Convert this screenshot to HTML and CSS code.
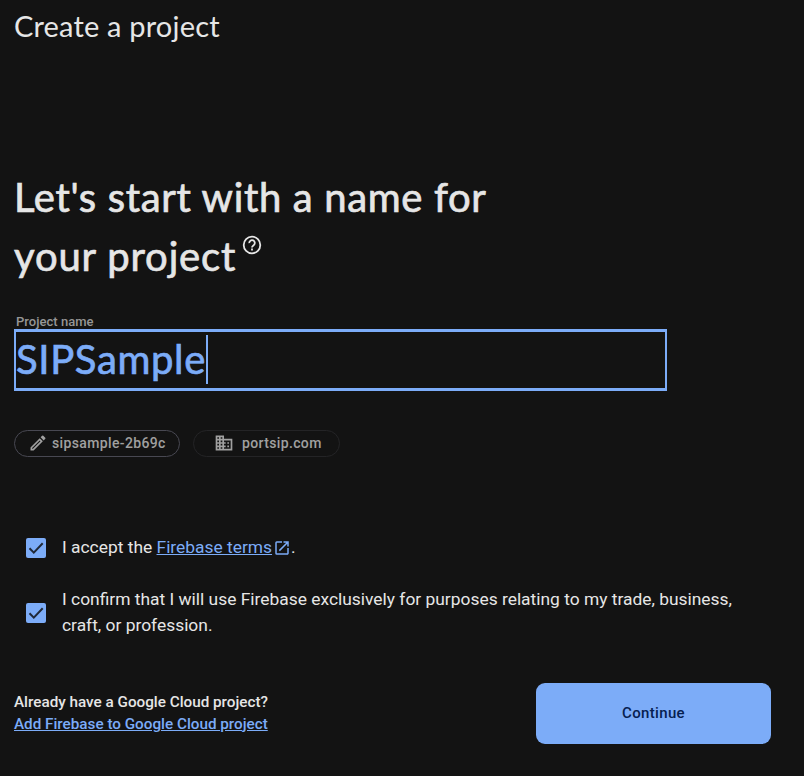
FILE: index.html
```html
<!DOCTYPE html>
<html lang="en">
<head>
<meta charset="utf-8">
<title>Create a project</title>
<link rel="stylesheet" href="styles.css">
</head>
<body>
<main class="page">
  <header class="title">Create a project</header>
  <h1 class="heading"><span class="line1">Let's start with a name for</span><br><span class="line2">your project</span><svg class="help" viewBox="0 0 20 20"><circle cx="10" cy="10" r="8.3"/><path d="M7.2 8.1a2.8 2.8 0 1 1 4.5 2.1c-.9.8-1.7 1.1-1.7 2.2M10 13.6v1.9"/></svg></h1>
  <label class="label">Project name</label>
  <div class="field"><span class="value">SIPSample</span><span class="caret"></span></div>
  <div class="chips">
    <div class="chip id"><svg class="pencil" viewBox="0 0 24 24"><path d="M3 17.25V21h3.75L17.81 9.94l-3.75-3.75L3 17.25zM5.92 19H5v-.92l9.06-9.06.92.92L5.92 19zM20.71 5.63l-2.34-2.34a1 1 0 0 0-1.42 0l-1.83 1.83 3.75 3.75 1.84-1.83a1 1 0 0 0 0-1.41z"/></svg><span>sipsample-2b69c</span></div>
    <div class="chip org"><svg class="domain" viewBox="0 0 24 24"><path d="M12 7V3H2v18h20V7H12zM6 19H4v-2h2v2zm0-4H4v-2h2v2zm0-4H4V9h2v2zm0-4H4V5h2v2zm4 12H8v-2h2v2zm0-4H8v-2h2v2zm0-4H8V9h2v2zm0-4H8V5h2v2zm10 12h-8v-2h2v-2h-2v-2h2v-2h-2V9h8v10zm-2-8h-2v2h2v-2zm0 4h-2v2h2v-2z"/></svg><span>portsip.com</span></div>
  </div>
  <div class="check first">
    <span class="box"><svg viewBox="0 0 20 20"><path d="M3.5 10.3l4.3 4.3L16.7 5.2"/></svg></span>
    <p class="terms">I accept the <a>Firebase terms</a><svg class="ext" viewBox="0 0 24 24"><path d="M19 19H5V5h7V3H5a2 2 0 0 0-2 2v14a2 2 0 0 0 2 2h14c1.1 0 2-.9 2-2v-7h-2v7zM14 3v2h3.59l-9.83 9.83 1.41 1.41L19 6.41V10h2V3h-7z"/></svg>.</p>
  </div>
  <div class="check second">
    <span class="box"><svg viewBox="0 0 20 20"><path d="M3.5 10.3l4.3 4.3L16.7 5.2"/></svg></span>
    <p class="confirm">I confirm that I will use Firebase exclusively for purposes relating to my trade, business,<br>craft, or profession.</p>
  </div>
  <footer class="footer">
    <div class="existing">Already have a Google Cloud project?<br><a>Add Firebase to Google Cloud project</a></div>
    <button class="continue">Continue</button>
  </footer>
</main>
</body>
</html>
```
FILE: styles.css
```css
* { box-sizing: border-box; }
body { margin: 0; background: #131313; color: #e6e6e6; font-family: Roboto, sans-serif; }
.page { height: 776px; padding: 0 33px 0 14px; display: flex; flex-direction: column; overflow: hidden; }
svg { fill: currentColor; flex: none; }
a { color: #7cacf8; text-decoration: underline; }
.title { height: 56px; font: 400 29px/52px Lato, sans-serif; letter-spacing: .18px; white-space: nowrap; }
.heading { margin: 112px 0 0; height: 118px; font: 400 40px/59px Lato, sans-serif; -webkit-text-stroke: .7px currentColor; white-space: nowrap; }
.line1 { letter-spacing: .66px; }
.line2 { letter-spacing: .85px; }
.help { width: 20px; height: 20px; margin-left: 6px; vertical-align: 16px; fill: none; stroke: currentColor; stroke-width: 1.8; }
.label { margin: 28px 0 0 2px; height: 15px; font-size: 13px; font-weight: 500; line-height: 15px; letter-spacing: .03px; color: #969696; }
.field { width: 653px; height: 62px; display: flex; align-items: center; border: 2px solid #7cacf8; border-width: 3px 2px 3px 2px; color: #7cacf8; }
.value { padding-bottom: 2px; font: 400 40px/54px Lato, sans-serif; letter-spacing: .65px; -webkit-text-stroke: .7px currentColor; }
.caret { width: 2px; height: 49px; margin-bottom: 2px; background: #7cacf8; }
.chips { display: flex; gap: 13px; margin-top: 39px; }
.chip { height: 27px; padding-bottom: 1px; display: flex; align-items: center; border: 1px solid #484852; border-radius: 14px; color: #a0a0a0; font-size: 14px; font-weight: 500; letter-spacing: .36px; white-space: nowrap; }
.id { width: 166px; padding-left: 13px; }
.org { width: 147px; padding-left: 20px; border-color: #242426; }
.pencil { width: 20px; height: 20px; margin-right: 4px; }
.domain { width: 20px; height: 20px; margin-right: 8px; }
.check { display: flex; align-items: center; margin-left: 12px; font-size: 17.4px; line-height: 26px; white-space: nowrap; }
.check p { margin: 0 0 0 16px; padding-bottom: 2px; }
.first { margin-top: 78px; height: 26px; }
.second { margin-top: 26px; height: 52px; }
.box { width: 20px; height: 20px; flex: none; border-radius: 2px; background: #7cacf8; }
.box svg { display: block; fill: none; stroke: #202938; stroke-width: 2; }
.ext { width: 18px; height: 18px; margin: 0 0 0 1px; vertical-align: -4px; color: #7cacf8; }
.footer { display: flex; justify-content: space-between; align-items: center; margin-top: 44px; height: 61px; }
.existing { padding-bottom: 2px; font-size: 15.25px; font-weight: 500; line-height: 22px; white-space: nowrap; }
.continue { width: 235px; height: 61px; padding: 0 0 2px; border: 0; border-radius: 9px; background: #7cacf8; color: #062050; font: 500 15px Roboto, sans-serif; letter-spacing: .35px; }
```
